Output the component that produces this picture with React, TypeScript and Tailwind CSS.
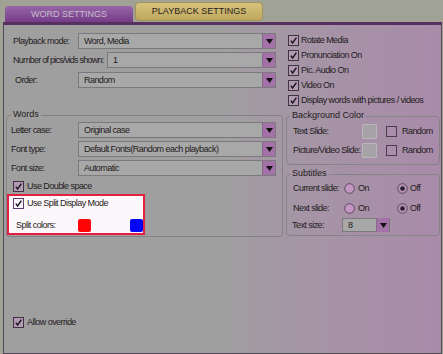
import React from "react";

const Check = ({ checked = true, bright = false }: { checked?: boolean; bright?: boolean }) => (
  <span
    className={
      bright
        ? "w-[11px] h-[11px] shrink-0 border border-[#5e3f6e] bg-[#fbf4fb] flex items-center justify-center"
        : checked
        ? "w-[11px] h-[11px] shrink-0 border border-[#3f3442] bg-[#b29bb2] flex items-center justify-center"
        : "w-[11px] h-[11px] shrink-0 border border-[#4a3d4c] bg-[#ab8eab] flex items-center justify-center"
    }
  >
    {checked && (
      <svg width="9" height="9" viewBox="0 0 9 9">
        <path d="M1.8 4.6 L3.6 7 L7.4 1.6" stroke="#1c141e" strokeWidth="1.4" fill="none" />
      </svg>
    )}
  </span>
);

const Radio = ({ on }: { on: boolean }) => (
  <svg width="11" height="11" viewBox="0 0 11 11" className="shrink-0">
    <circle cx="5.5" cy="5.5" r="4.8" fill={on ? "#b994b9" : "#c497c4"} stroke="#5b485d" strokeWidth="1" />
    {on && <circle cx="5.5" cy="5.5" r="2.3" fill="#2a1d2c" />}
  </svg>
);

const Select = ({ value, className }: { value: string; className: string }) => (
  <div className={"h-4 flex items-center border border-[#7b797b] bg-[#a9a8a9] " + className}>
    <span className="flex-1 pl-[5px] truncate">{value}</span>
    <span className="w-[13px] h-[14px] bg-[#a472a9] border-l border-[#876888] flex items-center justify-center">
      <svg width="7" height="5" viewBox="0 0 7 5">
        <path d="M0 0H7L3.5 5Z" fill="#141014" />
      </svg>
    </span>
  </div>
);

const Swatch = () => <span className="w-[15px] h-[15px] border border-[#b9b6b9] bg-[#a6a3a7] rounded-[1px]" />;

export default function App() {
  return (
    <div className="w-[443px] h-[354px] overflow-hidden whitespace-nowrap bg-[#a0a295] font-['Liberation_Sans',Arial,sans-serif] text-[9px] leading-none tracking-[-0.55px] text-[#1f1b20]">
      <div className="h-[22px] flex items-end pl-[5px]">
        <div className="w-[128px] h-[16px] rounded-t-[4px] bg-[linear-gradient(to_bottom,#9767a8,#763c89)] text-[#c6bfca] tracking-normal flex items-center justify-center">
          WORD SETTINGS
        </div>
        <div className="ml-[2px] mb-[1px] w-[128px] h-[19px] rounded-[4px] border border-[#a3915c] bg-[linear-gradient(to_bottom,#d6c37e,#bfa85e)] text-[#272219] tracking-normal flex items-center justify-center">
          PLAYBACK SETTINGS
        </div>
      </div>

      <div className="ml-[3px] w-[439px] h-[3px] bg-[#57305f]" />
      <div className="ml-[3px] w-[439px] h-[329px] border-x border-b border-[#4f4a51] bg-[linear-gradient(to_right,#a09fa0_0%,#a09fa0_50%,#a595a6_68%,#a98ba9_100%)] flex">
        {/* left column */}
        <div className="w-[280px] flex flex-col">
          <div className="mt-[8px] flex items-center pl-[9px]">
            <span className="w-[65px]">Playback mode:</span>
            <Select value="Word, Media" className="w-[198px]" />
          </div>
          <div className="mt-[3px] flex items-center pl-[9px]">
            <span className="w-[94px] tracking-[-0.75px]">Number of pics/vids shown:</span>
            <Select value="1" className="w-[169px]" />
          </div>
          <div className="mt-[4px] flex items-center pl-[11px]">
            <span className="w-[63px]">Order:</span>
            <Select value="Random" className="w-[198px]" />
          </div>

          <fieldset className="mt-[22px] ml-[2px] w-[277px] border border-[#858385] rounded-[3px] pb-[1px]">
            <legend className="ml-[4px] px-[2px] h-[10px] tracking-normal">Words</legend>
            <div className="mt-[2px] flex items-center pl-[4px]">
              <span className="w-[67px]">Letter case:</span>
              <Select value="Original case" className="w-[198px]" />
            </div>
            <div className="mt-[3px] flex items-center pl-[4px]">
              <span className="w-[67px]">Font type:</span>
              <Select value="Default Fonts(Random each playback)" className="w-[198px]" />
            </div>
            <div className="mt-[3px] flex items-center pl-[4px]">
              <span className="w-[67px]">Font size:</span>
              <Select value="Automatic" className="w-[198px]" />
            </div>
            <div className="mt-[5px] ml-[6px] flex items-center gap-[3px] h-[11px]">
              <Check />
              <span>Use Double space</span>
            </div>
            <div className="mt-[2px] w-[138px] h-[41px] border-2 border-[#e3203f] bg-[#fcf7fa] pl-[4px] pt-[2px]">
              <div className="flex items-center gap-[3px] h-[11px]">
                <Check bright />
                <span>Use Split Display Mode</span>
              </div>
              <div className="mt-[10px] flex items-center">
                <span className="w-[66px] pl-[3px]">Split colors:</span>
                <span className="w-[13px] h-[13px] bg-[#ff0505] rounded-[2px]" />
                <span className="ml-[39px] w-[13px] h-[13px] bg-[#0505f5] rounded-[2px]" />
              </div>
            </div>
          </fieldset>

          <div className="mt-[80px] ml-[9px] flex items-center gap-[3px] h-[11px]">
            <Check />
            <span>Allow override</span>
          </div>
        </div>

        {/* right column */}
        <div className="flex-1 flex flex-col">
          <div className="mt-[8px] pl-[4px] flex flex-col">
            {["Rotate Media", "Pronunciation On", "Pic. Audio On", "Video On", "Display words with pictures / videos"].map((t) => (
              <div key={t} className="h-[15px] flex items-center gap-[2px]">
                <Check />
                <span>{t}</span>
              </div>
            ))}
          </div>

          <fieldset className="mt-[3px] ml-[2px] w-[154px] border border-[#858385] rounded-[4px] pb-[6px]">
            <legend className="ml-[3px] px-[2px] h-[10px] tracking-normal">Background Color</legend>
            {["Text Slide:", "Picture/Video Slide:"].map((t, i) => (
              <div key={t} className={i === 0 ? "mt-[2px] h-[16px] flex items-center pl-[6px]" : "mt-[3px] h-[16px] flex items-center pl-[6px]"}>
                <span className="w-[69px]">{t}</span>
                <Swatch />
                <span className="ml-[9px]">
                  <Check checked={false} />
                </span>
                <span className="ml-[5px]">Random</span>
              </div>
            ))}
          </fieldset>

          <fieldset className="mt-[4px] ml-[2px] w-[154px] border border-[#858385] rounded-[4px] pb-[3px]">
            <legend className="ml-[3px] px-[2px] h-[10px] tracking-normal">Subtitles</legend>
            {["Current slide:", "Next slide:"].map((t, i) => (
              <div key={t} className={i === 0 ? "mt-[2px] h-[14px] flex items-center pl-[6px]" : "mt-[6px] h-[14px] flex items-center pl-[6px]"}>
                <span className="w-[51px]">{t}</span>
                <span className="w-[53px] flex items-center gap-[3px]">
                  <Radio on={false} />
                  <span>On</span>
                </span>
                <span className="flex items-center gap-[2px]">
                  <Radio on />
                  <span>Off</span>
                </span>
              </div>
            ))}
            <div className="mt-[3px] flex items-center pl-[5px]">
              <span className="w-[50px]">Text size:</span>
              <Select value="8" className="w-[48px] h-[14px]" />
            </div>
          </fieldset>
        </div>
      </div>
    </div>
  );
}
